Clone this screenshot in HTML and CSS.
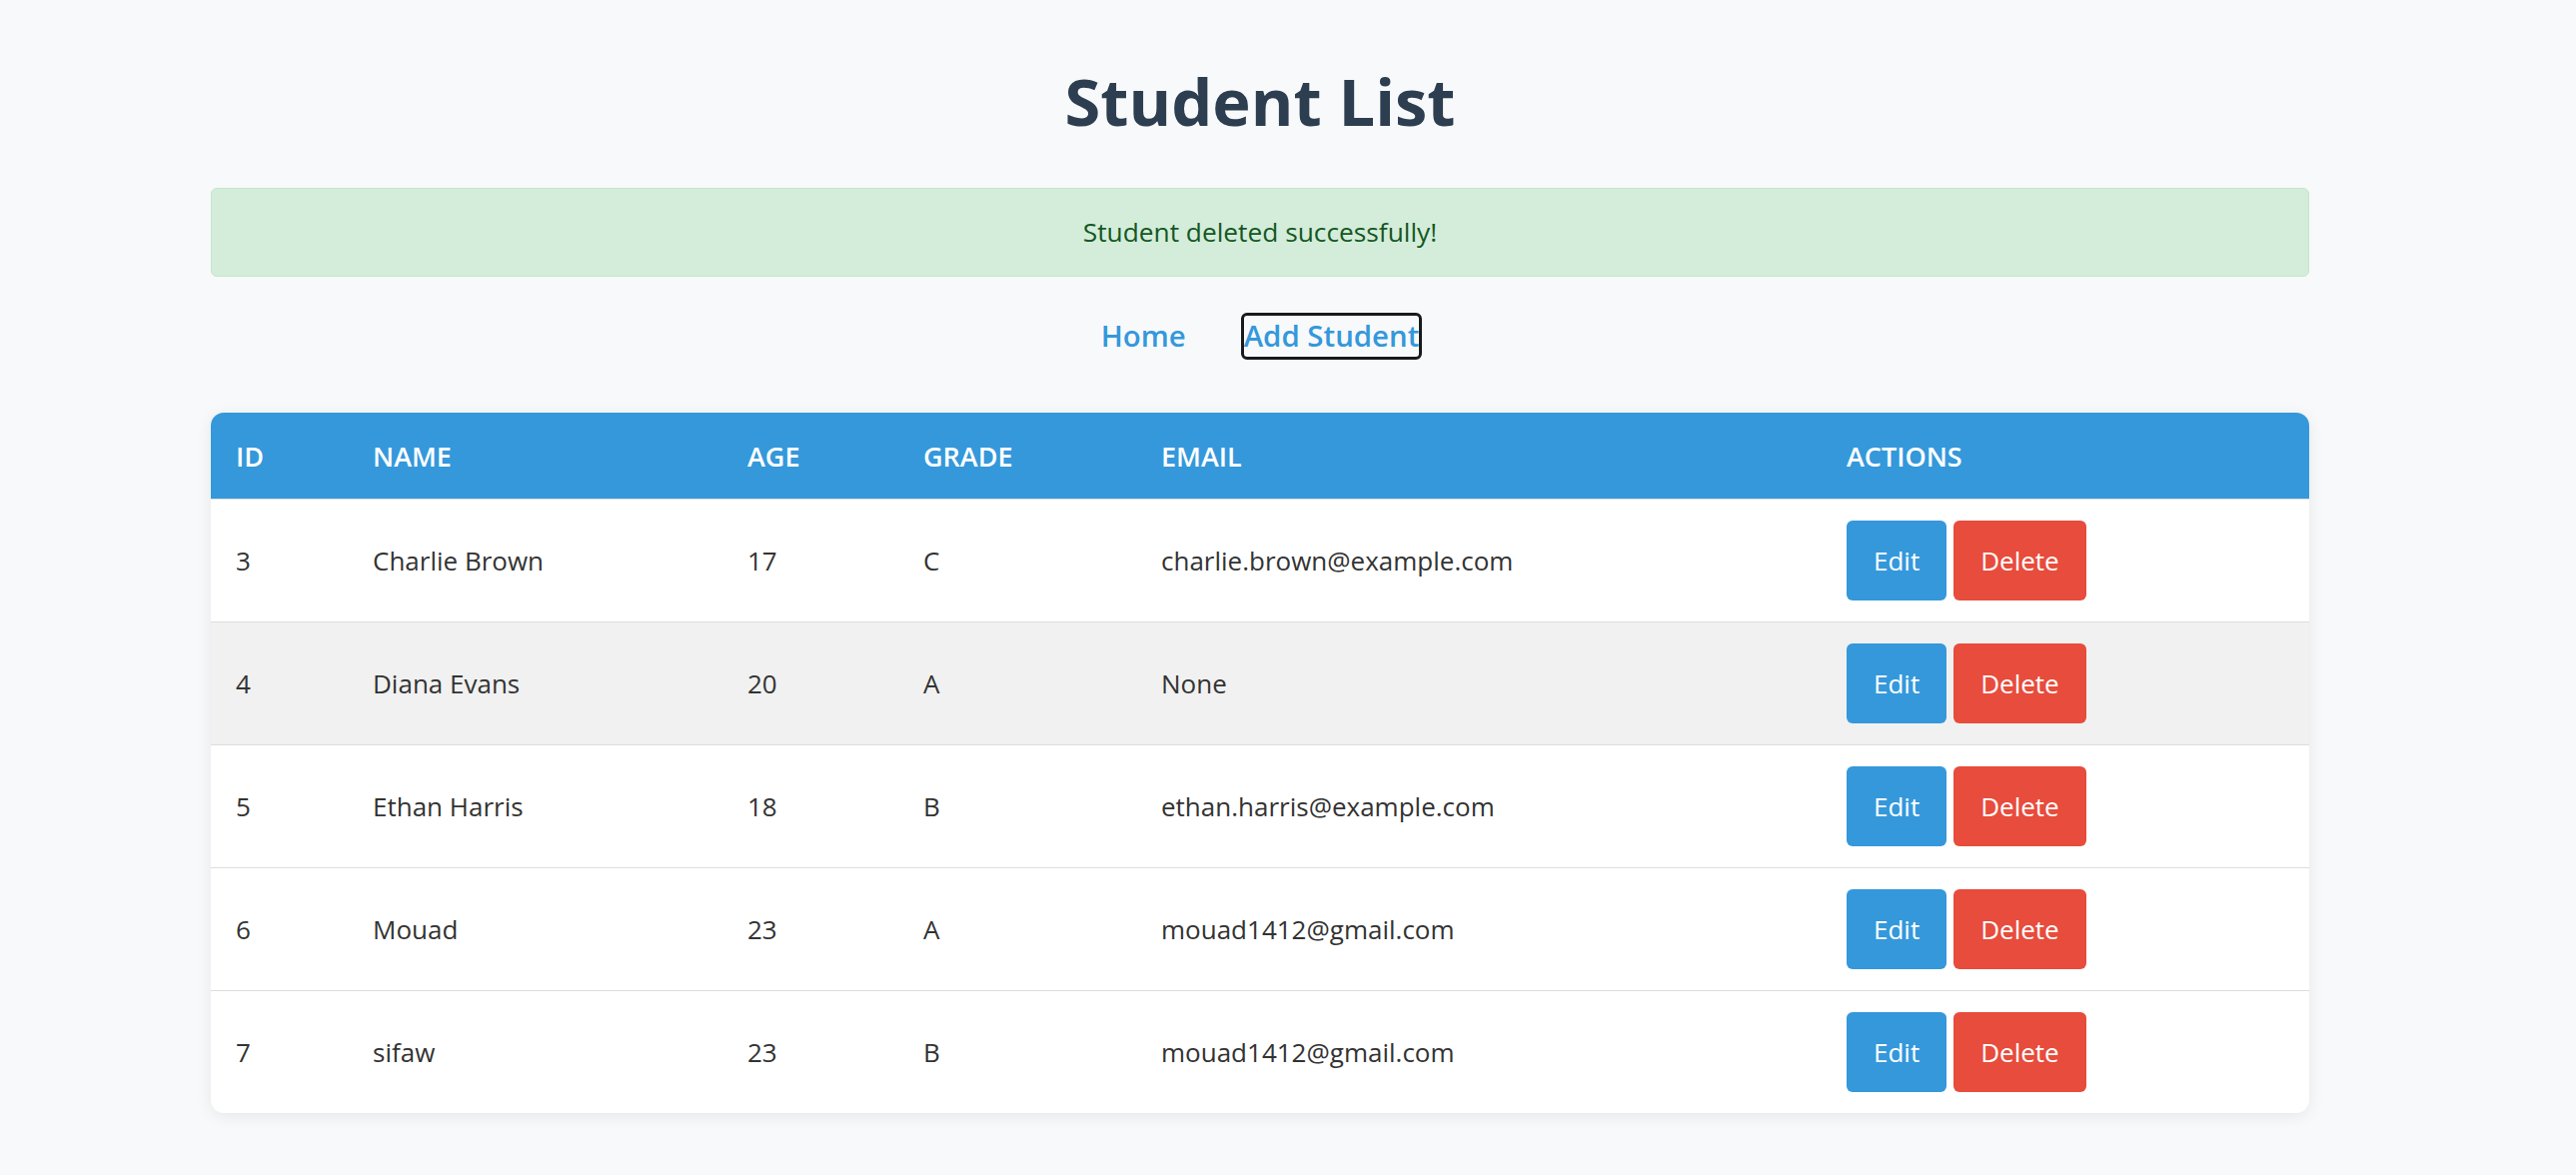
FILE: index.html
```html
<!DOCTYPE html>
<html lang="en">
<head>
<meta charset="utf-8">
<title>Student List</title>
<link rel="stylesheet" href="styles.css">
</head>
<body>
<main class="page">
  <h1 class="title">Student List</h1>
  <div class="alert">Student deleted successfully!</div>
  <nav class="nav">
    <a class="nav-link" href="#">Home</a>
    <a class="nav-link is-focused" href="#">Add Student</a>
  </nav>
  <div class="table-card">
    <table class="students">
      <colgroup>
        <col class="c-id"><col class="c-name"><col class="c-age"><col class="c-grade"><col class="c-email"><col class="c-actions">
      </colgroup>
      <thead>
        <tr><th>ID</th><th>NAME</th><th>AGE</th><th>GRADE</th><th>EMAIL</th><th>ACTIONS</th></tr>
      </thead>
      <tbody>
        <tr><td>3</td><td>Charlie Brown</td><td>17</td><td>C</td><td>charlie.brown@example.com</td><td><div class="actions"><a class="btn btn-edit" href="#">Edit</a><a class="btn btn-delete" href="#">Delete</a></div></td></tr>
        <tr class="is-hover"><td>4</td><td>Diana Evans</td><td>20</td><td>A</td><td>None</td><td><div class="actions"><a class="btn btn-edit" href="#">Edit</a><a class="btn btn-delete" href="#">Delete</a></div></td></tr>
        <tr><td>5</td><td>Ethan Harris</td><td>18</td><td>B</td><td>ethan.harris@example.com</td><td><div class="actions"><a class="btn btn-edit" href="#">Edit</a><a class="btn btn-delete" href="#">Delete</a></div></td></tr>
        <tr><td>6</td><td>Mouad</td><td>23</td><td>A</td><td>mouad1412@gmail.com</td><td><div class="actions"><a class="btn btn-edit" href="#">Edit</a><a class="btn btn-delete" href="#">Delete</a></div></td></tr>
        <tr class="last"><td>7</td><td>sifaw</td><td>23</td><td>B</td><td>mouad1412@gmail.com</td><td><div class="actions"><a class="btn btn-edit" href="#">Edit</a><a class="btn btn-delete" href="#">Delete</a></div></td></tr>
      </tbody>
    </table>
  </div>
</main>
</body>
</html>
```
FILE: styles.css
```css
* { box-sizing: border-box; }
html, body { margin: 0; padding: 0; }
body {
  background: #f8f9fa;
  font-family: "Open Sans", "Noto Sans", sans-serif;
  color: #333;
  padding-right: 56px;
}
.page {
  width: 2100px;
  margin: 0 auto;
  padding-bottom: 60px;
}
.title {
  margin: 61px 0 0;
  text-align: center;
  font-size: 65px;
  line-height: 80px;
  font-weight: 700;
  color: #2c3e50;
}
.alert {
  margin-top: 47px;
  height: 89px;
  line-height: 87px;
  border: 1px solid #c3e6cb;
  border-radius: 6px;
  background: #d4edda;
  color: #155724;
  font-size: 26.3px;
  text-align: center;
}
.nav {
  margin-top: 39px;
  display: flex;
  justify-content: center;
  gap: 58px;
}
.nav-link {
  display: inline-block;
  line-height: 41px;
  font-size: 29.4px;
  font-weight: 600;
  color: #3498db;
  text-decoration: none;
  border-radius: 3px;
}
.nav-link.is-focused {
  outline: 3px solid #1a1a1a;
  outline-offset: 0;
  box-shadow: 0 0 0 1px #fff inset;
}
.table-card {
  margin-top: 56px;
  background: #fff;
  border-radius: 13px;
  overflow: hidden;
  box-shadow: 0 3px 16px rgba(0, 0, 0, 0.08);
}
.students {
  width: 100%;
  border-collapse: collapse;
  table-layout: fixed;
}
.c-id { width: 137px; }
.c-name { width: 375px; }
.c-age { width: 176px; }
.c-grade { width: 238px; }
.c-email { width: 686px; }
.c-actions { width: 488px; }
.students th {
  background: #3498db;
  color: #fff;
  font-size: 27px;
  font-weight: 600;
  line-height: 37px;
  padding: 25px 25px 24px;
  text-align: left;
  border-bottom: 1px solid #ddd;
}
.students td {
  font-size: 26px;
  line-height: 36px;
  padding: 21px 25px 21px;
  text-align: left;
  vertical-align: middle;
  border-bottom: 1px solid #ddd;
  color: #333;
}
.students tr.last td { border-bottom: none; }
.students tr.is-hover td { background: #f1f1f1; }
.actions {
  display: flex;
  gap: 7px;
}
.btn {
  display: inline-block;
  height: 80px;
  line-height: 80px;
  padding: 0 27px;
  border-radius: 6px;
  font-size: 26px;
  color: #fff;
  text-decoration: none;
}
.btn-edit { background: #3498db; }
.btn-delete { background: #e74c3c; }
```
